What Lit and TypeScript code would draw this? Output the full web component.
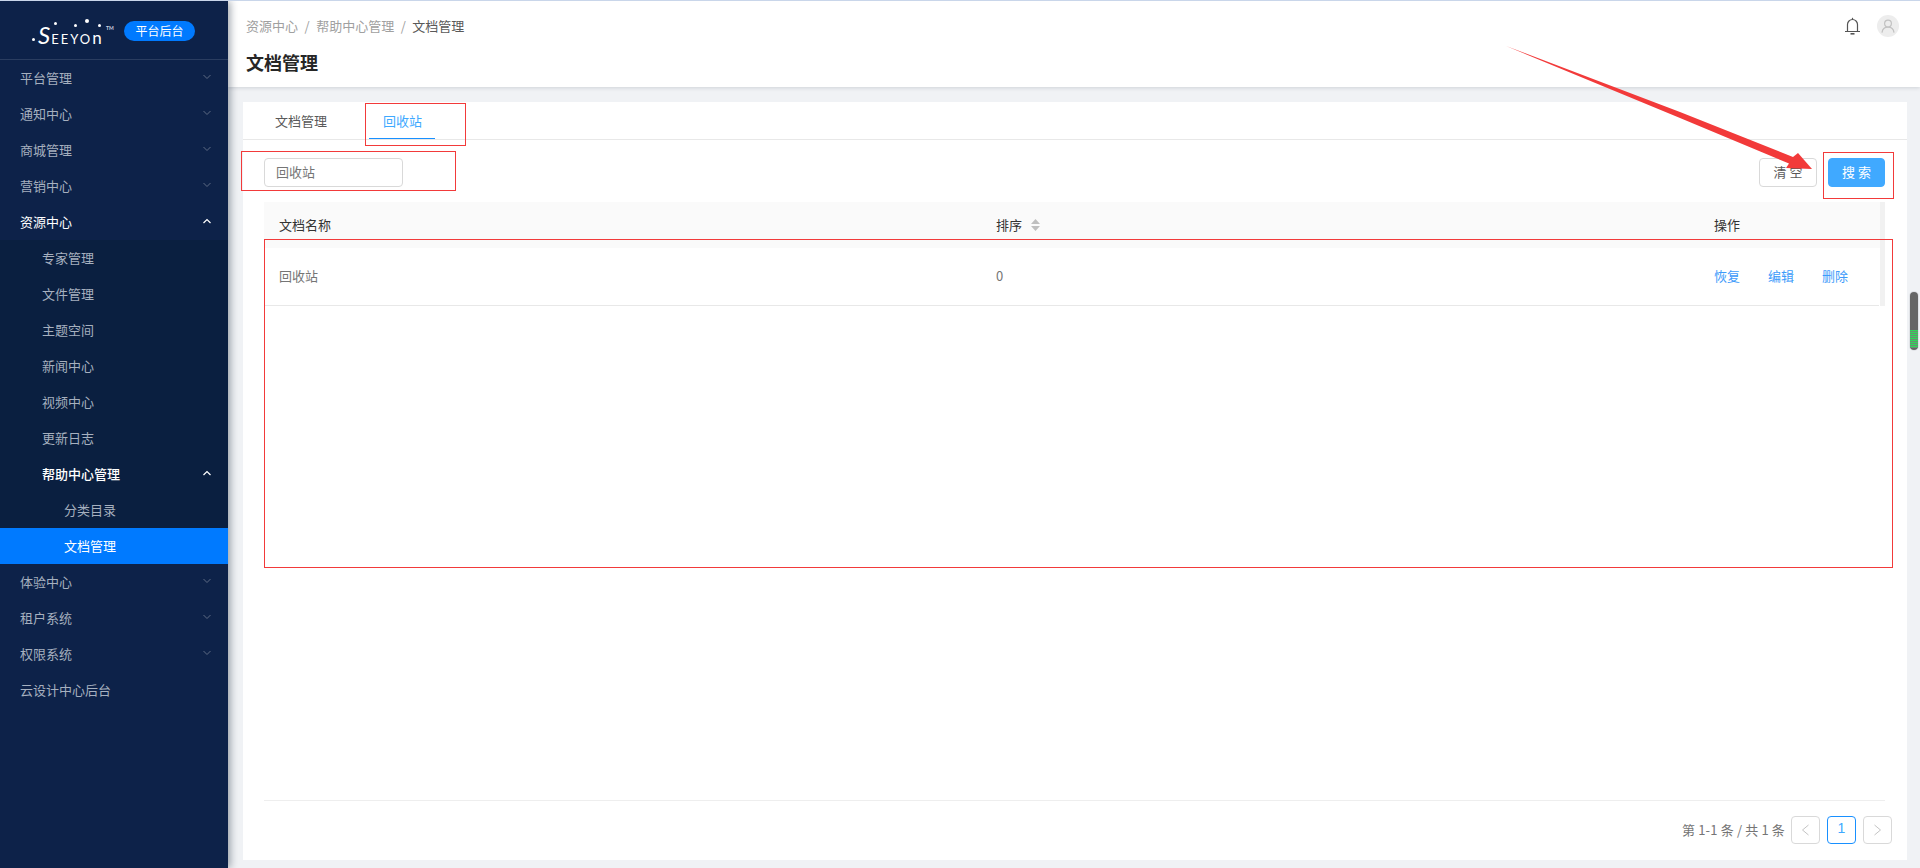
import { LitElement, html, css, svg } from "lit";
import { customElement } from "lit/decorators.js";

const down = html`<svg class="chev" width="10" height="6" viewBox="0 0 10 6"><path d="M1.500 1 5 4.500 8.500 1" fill="none" stroke="currentColor" stroke-width="1"/></svg>`;
const up = html`<svg class="chev up" width="10" height="6" viewBox="0 0 10 6"><path d="M1.500 5 5 1.500 8.500 5" fill="none" stroke="currentColor" stroke-width="1.200"/></svg>`;

@customElement("app-root")
export class AppRoot extends LitElement {
  static styles = css`
    :host {
      display: flex;
      position: relative;
      width: 1920px;
      height: 868px;
      overflow: hidden;
      background: #f0f2f5;
      border-top: 1px solid #c9d6ea;
      box-sizing: border-box;
      font-family: "Noto Sans CJK SC", "Liberation Sans", sans-serif;
      font-size: 13px;
      color: #595959;
    }
    .side {
      width: 228px;
      flex: none;
      background: #0d2249;
      color: #a6b0bf;
      box-shadow: 2px 0 8px rgba(0, 21, 41, 0.4);
      position: relative;
      z-index: 2;
    }
    .brand {
      height: 58px;
      border-bottom: 1px solid #2a3d60;
      display: flex;
      align-items: center;
      position: relative;
    }
    .logo {
      position: relative;
      margin-left: 32px;
      width: 84px;
      height: 26px;
      margin-top: 4px;
      color: #fff;
      font-family: "Lato", "Liberation Sans", sans-serif;
      font-weight: 400;
      font-size: 13px;
      line-height: 26px;
      letter-spacing: 2px;
      white-space: nowrap;
      padding-top: 3px;
      box-sizing: border-box;
    }
    .logo .s {
      font-style: italic;
      font-size: 24px;
      letter-spacing: 0;
      margin-left: 6px;
      margin-right: 1px;
    }
    .logo .n { font-size: 17px; letter-spacing: 0; }
    .logo sup {
      position: absolute;
      left: 74px;
      top: 6px;
      line-height: 6px;
      font-size: 5px;
      letter-spacing: 0;
      font-weight: 700;
      color: #cfd5e0;
    }
    .dot {
      position: absolute;
      background: #fff;
      border-radius: 50%;
      width: 3px;
      height: 3px;
    }
    .d1 { left: 0; top: 19px; }
    .d2 { left: 22px; top: 3px; }
    .d3 { left: 42px; top: 5px; }
    .d4 { left: 53px; top: 0; width: 4px; height: 4px; }
    .d5 { left: 66px; top: 5px; }
    .badge {
      margin-left: 8px;
      margin-top: 2px;
      width: 71px;
      height: 20px;
      border-radius: 10px;
      background: #007aff;
      color: #fff;
      font-size: 12px;
      line-height: 19px;
      text-align: center;
    }
    .item {
      height: 36px;
      box-sizing: border-box;
      display: flex;
      align-items: center;
      justify-content: space-between;
      padding: 0 16px 2px 20px;
      white-space: nowrap;
    }
    .item.l2 { padding-left: 42px; }
    .item.l3 { padding-left: 64px; }
    .item.open { color: #fff; }
    .item.bold { font-weight: 500; }
    .item.active { background: #007aff; color: #fff; }
    .sub { background: #0a1f40; }
    .chev { color: #5d6b84; flex: none; }
    .chev.up { color: #fff; }

    .right {
      flex: 1;
      min-width: 0;
      display: flex;
      flex-direction: column;
    }
    .head {
      height: 86px;
      flex: none;
      background: #fff;
      box-shadow: 0 1px 4px rgba(0, 21, 41, 0.14);
      display: flex;
      justify-content: space-between;
      padding: 0 21px 0 18px;
      position: relative;
      z-index: 1;
    }
    .crumbs {
      display: flex;
      gap: 6.5px;
      margin-top: 15px;
      line-height: 19px;
      color: #a0a0a0;
    }
    .crumbs .cur { color: #595959; }
    .title {
      margin-top: 14px;
      font-size: 18px;
      font-weight: 700;
      line-height: 26px;
      color: #262626;
    }
    .tools {
      display: flex;
      align-items: flex-start;
      gap: 16px;
      padding-top: 14px;
    }
    .bell { margin-top: 2px; display: block; }
    .avatar {
      width: 22px;
      height: 22px;
      border-radius: 50%;
      background: #ededed;
      display: flex;
      align-items: center;
      justify-content: center;
    }
    .main {
      flex: 1;
      min-height: 0;
      padding: 15px 13px 8px 15px;
      display: flex;
    }
    .card {
      flex: 1;
      min-width: 0;
      background: #fff;
      display: flex;
      flex-direction: column;
    }
    .tabs {
      height: 37px;
      flex: none;
      border-bottom: 1px solid #e8e8e8;
      display: flex;
      padding-left: 32px;
      gap: 56px;
      position: relative;
    }
    .tab { line-height: 38px; height: 37px; }
    .tab.on { color: #40a9ff; position: relative; }
    .tab.on::after {
      content: "";
      position: absolute;
      left: -14px;
      right: -13px;
      bottom: 0;
      height: 1px;
      background: #1890ff;
    }
    .bar {
      flex: none;
      display: flex;
      justify-content: space-between;
      padding: 18px 22px 15px 21px;
    }
    .input {
      width: 139px;
      height: 29px;
      box-sizing: border-box;
      border: 1px solid #d9d9d9;
      border-radius: 4px;
      padding-left: 11px;
      line-height: 25px;
      color: #757575;
    }
    .btns { display: flex; gap: 11px; }
    .btn {
      width: 58px;
      height: 29px;
      box-sizing: border-box;
      border: 1px solid #d9d9d9;
      border-radius: 4px;
      text-align: center;
      line-height: 26px;
      letter-spacing: 3px;
      padding-left: 3px;
      color: #595959;
      background: #fff;
    }
    .btn.primary {
      width: 57px;
      background: #40a9ff;
      border-color: #40a9ff;
      color: #fff;
    }
    .table {
      flex: 1;
      margin: 0 22px 0 21px;
      min-height: 0;
      position: relative;
      border-bottom: 1px solid #eeeeee;
    }
    .thead, .trow {
      display: grid;
      grid-template-columns: 717px 718px 1fr;
      align-items: center;
    }
    .thead {
      height: 46px;
      background: #fafafa;
      color: #333;
    }
    .trow {
      height: 57px;
      border-bottom: 1px solid #e8e8e8;
      margin-right: 6px;
      color: #757575;
    }
    .cell { padding: 0 0 2px 15px; display: flex; align-items: center; }
    .sorter { margin-left: 9px; margin-top: 2px; display: block; }
    .acts { display: flex; gap: 28px; color: #3d9bfa; }
    .gutter {
      position: absolute;
      right: 0;
      top: 0;
      width: 5px;
      height: 104px;
      background: #f1f1f1;
    }
    .pager {
      flex: none;
      height: 44px;
      display: flex;
      justify-content: flex-end;
      align-items: flex-start;
      padding: 15px 15px 0 0;
      gap: 7px;
    }
    .count {
      line-height: 27px;
      margin-right: -1px;
      letter-spacing: 0.15px;
      color: #757575;
    }
    .pg {
      width: 29px;
      height: 28px;
      box-sizing: border-box;
      border: 1px solid #d9d9d9;
      border-radius: 4px;
      display: flex;
      align-items: center;
      justify-content: center;
      font-family: "Liberation Sans", sans-serif;
      font-size: 14px;
      color: #40a9ff;
    }
    .pg.cur { border-color: #1890ff; padding-bottom: 4px; }

    .mark {
      position: absolute;
      border: 1px solid #f23a3a;
      box-sizing: border-box;
      z-index: 5;
      pointer-events: none;
    }
    .m1 { left: 365px; top: 102px; width: 101px; height: 43px; }
    .m2 { left: 241px; top: 150px; width: 215px; height: 40px; }
    .m3 { left: 1823px; top: 151px; width: 71px; height: 47px; }
    .m4 { left: 264px; top: 238px; width: 1629px; height: 329px; }
    .arrow {
      position: absolute;
      left: 0;
      top: -1px;
      z-index: 6;
      pointer-events: none;
    }
    .thumb {
      position: absolute;
      left: 1910px;
      top: 291px;
      width: 8px;
      height: 58px;
      border-radius: 4px;
      background: #666;
      box-shadow: 0 0 0 1px #e0e2e6;
      overflow: hidden;
      z-index: 4;
    }
    .thumb i {
      position: absolute;
      left: 0;
      right: 0;
      bottom: 2px;
      height: 18px;
      background: repeating-linear-gradient(#2fd65a 0 1px, #6a8d72 1px 2px);
    }
  `;

  render() {
    const m = (t: string, open = false) => html`<div class="item ${open ? "open" : ""}"><span>${t}</span>${open ? up : down}</div>`;
    const l2 = (t: string) => html`<div class="item l2"><span>${t}</span></div>`;
    return html`
      <aside class="side">
        <div class="brand">
          <div class="logo">
            <i class="dot d1"></i><i class="dot d2"></i><i class="dot d3"></i><i class="dot d4"></i><i class="dot d5"></i>
            <span class="s">S</span>EEYO<span class="n">n</span><sup>TM</sup>
          </div>
          <div class="badge">平台后台</div>
        </div>
        ${m("平台管理")}${m("通知中心")}${m("商城管理")}${m("营销中心")}${m("资源中心", true)}
        <div class="sub">
          ${l2("专家管理")}${l2("文件管理")}${l2("主题空间")}${l2("新闻中心")}${l2("视频中心")}${l2("更新日志")}
          <div class="item l2 open bold"><span>帮助中心管理</span>${up}</div>
          <div class="item l3"><span>分类目录</span></div>
          <div class="item l3 active"><span>文档管理</span></div>
        </div>
        ${m("体验中心")}${m("租户系统")}${m("权限系统")}
        <div class="item"><span>云设计中心后台</span></div>
      </aside>
      <div class="right">
        <header class="head">
          <div>
            <div class="crumbs"><span>资源中心</span><span>/</span><span>帮助中心管理</span><span>/</span><span class="cur">文档管理</span></div>
            <div class="title">文档管理</div>
          </div>
          <div class="tools">
            <svg class="bell" width="17" height="19" viewBox="0 0 17 19" fill="none" stroke="#555" stroke-width="1.200">
              <path d="M1 14.500h15M3.500 14.500V7.500a5 5 0 0 1 10 0v7"/><path d="M8.500 .8v1.800"/><path d="M6.500 16.800h4" stroke-width="1.600"/>
            </svg>
            <div class="avatar">
              <svg width="14" height="14" viewBox="0 0 14 14" fill="none" stroke="#c2c2c2" stroke-width="1.200">
                <circle cx="7" cy="4.600" r="3.400"/><path d="M1 13.600c.4-3.400 2.800-5.400 6-5.400s5.600 2 6 5.400"/>
              </svg>
            </div>
          </div>
        </header>
        <main class="main">
          <section class="card">
            <nav class="tabs"><div class="tab">文档管理</div><div class="tab on">回收站</div></nav>
            <div class="bar">
              <div class="input">回收站</div>
              <div class="btns"><div class="btn">清空</div><div class="btn primary">搜索</div></div>
            </div>
            <div class="table">
              <div class="gutter"></div>
              <div class="thead">
                <div class="cell">文档名称</div>
                <div class="cell">排序
                  <svg class="sorter" width="9" height="12" viewBox="0 0 9 12" fill="#bfbfbf"><path d="M4.500 0 9 5H0zM0 7h9l-4.500 5z"/></svg>
                </div>
                <div class="cell">操作</div>
              </div>
              <div class="trow">
                <div class="cell">回收站</div>
                <div class="cell">0</div>
                <div class="cell"><div class="acts"><span>恢复</span><span>编辑</span><span>删除</span></div></div>
              </div>
            </div>
            <div class="pager">
              <div class="count">第 1-1 条 / 共 1 条</div>
              <div class="pg"><svg width="9" height="12" viewBox="0 0 9 12" fill="none" stroke="#c4c4c4"><path d="M7.500 1 1.500 6l6 5"/></svg></div>
              <div class="pg cur">1</div>
              <div class="pg"><svg width="9" height="12" viewBox="0 0 9 12" fill="none" stroke="#c4c4c4"><path d="M1.500 1l6 5-6 5"/></svg></div>
            </div>
          </section>
        </main>
      </div>
      <div class="mark m1"></div>
      <div class="mark m2"></div>
      <div class="mark m3"></div>
      <div class="mark m4"></div>
      <div class="thumb"><i></i></div>
      <svg class="arrow" width="1920" height="868">
        ${svg`<polygon points="1506,46 1680,112 1793,157 1798,153 1812,169 1786,168 1789,163.500 1680,118" fill="#f23a3a"/>`}
      </svg>
    `;
  }
}
